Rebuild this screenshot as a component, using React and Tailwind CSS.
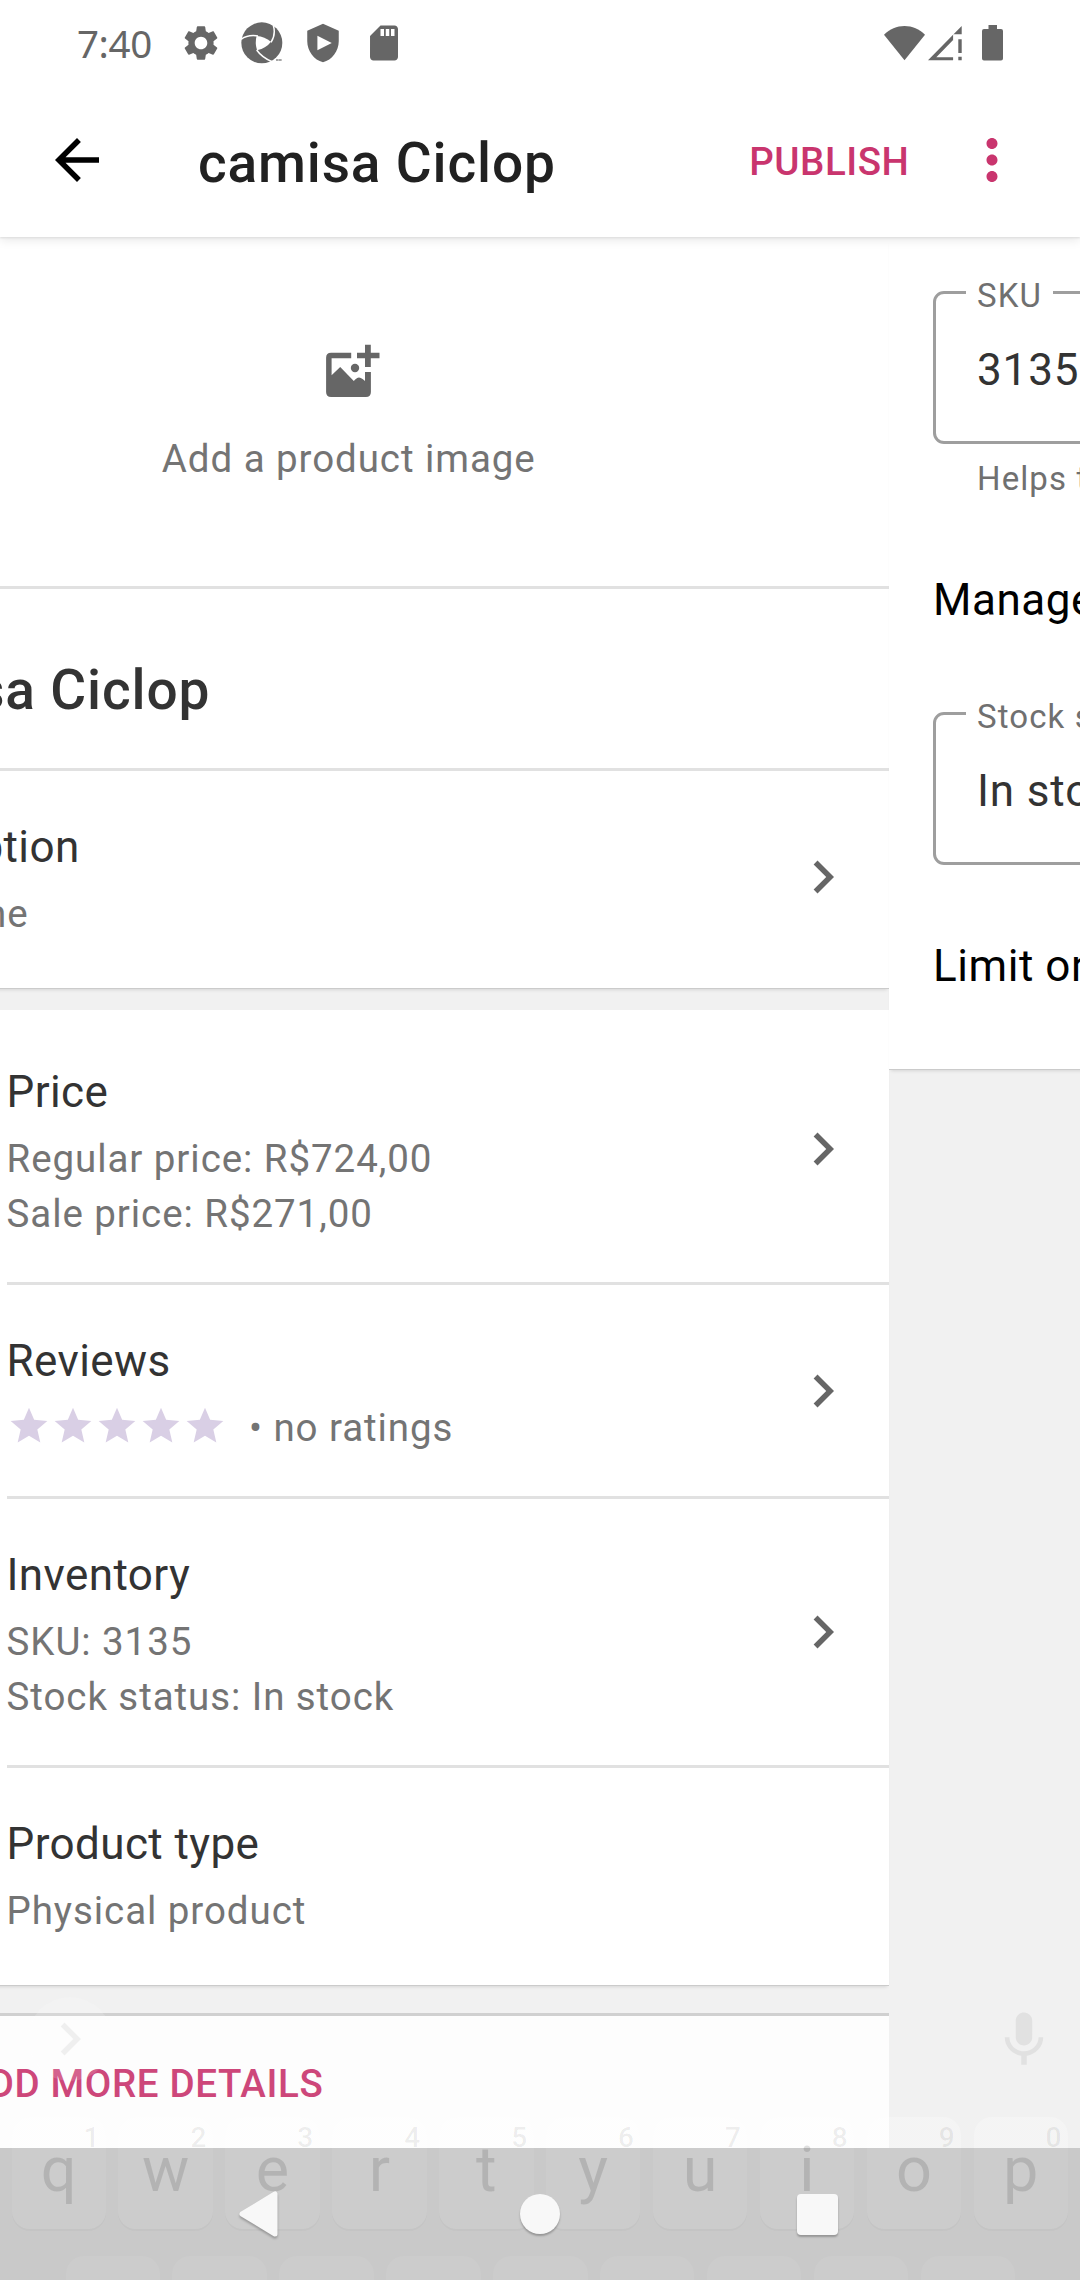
import React from "react";

const TITLE = "text-[44px] leading-[60px] tracking-[0.4px] text-[#333333] whitespace-nowrap";
const BODY = "text-[38.5px] leading-[55px] tracking-[0.93px] text-[#747474] whitespace-nowrap";

function StatusBar() {
  return (
    <div className="flex h-[86px] shrink-0 items-center pl-[77px] pr-[77px] text-[#666666]">
      <span className="w-[103px] font-['Noto_Sans'] text-[38.5px] leading-[60px] tracking-[-0.4px]">7:40</span>
      <div className="flex items-center gap-[19px]">
        <svg className="h-[42px] w-[42px]" viewBox="0 0 24 24" fill="currentColor">
          <path d="M19.14 12.94c.04-.3.06-.61.06-.94 0-.32-.02-.64-.07-.94l2.03-1.58c.18-.14.23-.41.12-.61l-1.92-3.32c-.12-.22-.37-.29-.59-.22l-2.39.96c-.5-.38-1.03-.7-1.62-.94L14.4 2.81c-.04-.24-.24-.41-.48-.41h-3.84c-.24 0-.43.17-.47.41L9.25 5.35c-.59.24-1.13.57-1.62.94L5.24 5.33c-.22-.08-.47 0-.59.22L2.74 8.87c-.12.21-.08.47.12.61l2.03 1.58c-.05.3-.09.63-.09.94s.02.64.07.94l-2.03 1.58c-.18.14-.23.41-.12.61l1.92 3.32c.12.22.37.29.59.22l2.39-.96c.5.38 1.03.7 1.62.94l.36 2.54c.05.24.24.41.48.41h3.84c.24 0 .44-.17.47-.41l.36-2.54c.59-.24 1.13-.56 1.62-.94l2.39.96c.22.08.47 0 .59-.22l1.92-3.32c.12-.22.07-.47-.12-.61l-2.01-1.58zM12 15.6c-1.98 0-3.6-1.62-3.6-3.6s1.62-3.6 3.6-3.6 3.6 1.62 3.6 3.6-1.62 3.6-3.6 3.6z" />
        </svg>
        <svg className="h-[42px] w-[42px]" viewBox="-1 -1 126 126">
          <circle cx="61.5" cy="61.5" r="61.5" fill="#666666" />
          <path d="M46 41Q70 43 89 58Q76 76 47 84Q40 60 46 41Z" fill="#ffffff" />
          <path d="M-1 51Q20 36 50 41M89 60Q104 38 96 9M46 83Q62 106 94 119" fill="none" stroke="#ffffff" strokeWidth="4.5" />
          <path d="M104 113h8M113 113h8" stroke="#8a8a8a" strokeWidth="4" />
        </svg>
        <svg className="h-[42px] w-[42px]" viewBox="0 0 24 24" fill="currentColor">
          <path fillRule="evenodd" d="M12 1L3 5v6c0 5.55 3.84 10.74 9 12 5.16-1.26 9-6.45 9-12V5l-9-4zM8.8 7.8L17 12l-8.2 4.2z" />
        </svg>
        <svg className="h-[42px] w-[42px]" viewBox="0 0 24 24" fill="currentColor">
          <path d="M18 2h-8L4.02 8 4 20c0 1.1.9 2 2 2h12c1.1 0 2-.9 2-2V4c0-1.1-.9-2-2-2zm-6 6h-2V4h2v4zm3 0h-2V4h2v4zm3 0h-2V4h2v4z" />
        </svg>
      </div>
      <div className="ml-auto flex items-center">
        <svg className="h-[35px] w-[41px]" viewBox="0 0 41 35" fill="currentColor">
          <path d="M20.5 34.3L0 8.8C5.5 3 13 0 20.5 0S35.5 3 41 8.8Z" />
        </svg>
        <svg className="ml-[3.5px] h-[35px] w-[34px]" viewBox="0 0 34 35" fill="currentColor">
          <path fillRule="evenodd" d="M33.7 0V8.3H25.1V34.3H0ZM25.1 14L8.3 31.3H25.1Z" />
          <path d="M30.3 13.3h3.4V27h-3.4zM30.3 30.7h3.4v3.6h-3.4z" />
        </svg>
        <svg className="ml-5 h-[36px] w-[21px]" viewBox="0 0 21 36" fill="currentColor">
          <path d="M6.5 0h8.5v4H19q2 0 2 2V33.5q0 2-2 2H2q-2 0-2-2V6q0-2 2-2h4.5z" />
        </svg>
      </div>
    </div>
  );
}

function TopBar() {
  return (
    <div className="flex h-[151px] shrink-0 items-center pb-[3px] pl-[44px] pr-[55px]">
      <svg className="h-[66px] w-[66px]" viewBox="0 0 24 24" fill="#000000">
        <path d="M20 11H7.83l5.59-5.59L12 4l-8 8 8 8 1.41-1.41L7.83 13H20v-2z" />
      </svg>
      <h1 className="ml-[88px] pt-[6px] text-[55px] font-medium leading-[70px] tracking-[0.85px] text-[#212121]">camisa Ciclop</h1>
      <span className="ml-auto pt-[3px] text-[38.5px] font-medium leading-[55px] tracking-[0.55px] text-[#c9356e]">PUBLISH</span>
      <svg className="ml-[49.5px] h-[66px] w-[66px]" viewBox="0 0 24 24" fill="#c9356e">
        <path d="M12 8c1.1 0 2-.9 2-2s-.9-2-2-2-2 .9-2 2 .9 2 2 2zm0 2c-1.1 0-2 .9-2 2s.9 2 2 2 2-.9 2-2-.9-2-2-2zm0 6c-1.1 0-2 .9-2 2s.9 2 2 2 2-.9 2-2-.9-2-2-2z" />
      </svg>
    </div>
  );
}

function Chevron() {
  return (
    <svg className="ml-auto h-[66px] w-[66px] shrink-0" viewBox="0 0 24 24" fill="#666666">
      <path d="M10 6L8.59 7.41 13.17 12l-4.58 4.59L10 18l6-6z" />
    </svg>
  );
}

function Row({ title, children, chevron = true }) {
  return (
    <div className="flex items-center pl-[198px] pr-[33.5px]">
      <div className="pb-[41px] pt-[46px]">
        <div className={TITLE}>{title}</div>
        <div className="mt-[9px]">{children}</div>
      </div>
      {chevron && <Chevron />}
    </div>
  );
}

function Divider({ inset }) {
  return <div className={inset ? "ml-[198px] h-[3px] bg-[#e1e1e1]" : "h-[3px] bg-[#e1e1e1]"} />;
}

function Stars() {
  return (
    <div className="mb-[3px] flex">
      {[0, 1, 2, 3, 4].map((i) => (
        <svg key={i} className="h-[44px] w-[44px]" viewBox="0 0 24 24" fill="#d9cfe5">
          <path d="M12 17.27L18.18 21l-1.64-7.03L22 9.24l-7.19-.61L12 2 9.19 8.63 2 9.24l5.46 4.73L5.82 21z" />
        </svg>
      ))}
    </div>
  );
}

const CARD = "relative bg-white shadow-[0_1px_0_#cbcbcb,0_4px_3px_-2px_#d6d6d6]";

function ProductPage() {
  return (
    <div className="-ml-[191.5px] w-[1080.5px] shrink-0">
      <div className={CARD}>
        <div className="flex flex-col items-center pb-[100px] pt-[107px]">
          <svg className="h-[54px] w-[64px]" viewBox="-9 0 64 54" fill="#666666">
            <path d="M39 .7h5.8v8h8.7v5.6h-8.7v8.6H39v-8.6h-8V8.7h8z" />
            <path fillRule="evenodd" d="M25.2 8.7v5.6H5.6v17L14.2 23 27.8 37q4-5 7-3 2.2 1 4.2 3V28h5.9v20q0 5-5 5H5.1q-5 0-5-5V13.7q0-5 5-5z" />
            <circle cx="29" cy="24" r="4.2" />
          </svg>
          <div className={"mt-[33px] " + BODY}>Add a product image</div>
        </div>
        <Divider />
        <div className="pb-[43px] pl-11 pt-[66px] text-[55px] font-medium leading-[70px] tracking-[0.85px] text-[#333333]">
          camisa Ciclop
        </div>
        <Divider />
        <div className="flex items-center pb-[6px] pl-11 pr-[33.5px]">
          <div className="pb-[41px] pt-[46px]">
            <div className={TITLE}>Description</div>
            <div className={"mt-[9px] w-[176px] text-right " + BODY}>ne</div>
          </div>
          <Chevron />
        </div>
      </div>

      <div className={"mt-[22px] py-[6px] " + CARD}>
        <Row title="Price">
          <div className={BODY}>Regular price: R$724,00</div>
          <div className={BODY}>Sale price: R$271,00</div>
        </Row>
        <Divider inset />
        <Row title="Reviews">
          <div className={"flex items-center " + BODY}>
            <Stars />
            <span className="ml-[22.5px]">• no ratings</span>
          </div>
        </Row>
        <Divider inset />
        <Row title="Inventory">
          <div className={BODY}>SKU: 3135</div>
          <div className={BODY}>Stock status: In stock</div>
        </Row>
        <Divider inset />
        <Row title="Product type" chevron={false}>
          <div className={BODY}>Physical product</div>
        </Row>
      </div>

      <div className="mt-7 h-[200px] border-t-[3px] border-[#d0d0d0] bg-[#fdfdfd] pt-[40px]">
        <div className="w-[515px] text-right text-[38.5px] font-medium leading-[55px] tracking-[0.65px] text-[#cd477a]">ADD MORE DETAILS</div>
      </div>
    </div>
  );
}

function Field({ label, value }) {
  return (
    <div className="relative h-[153px] w-[992px] rounded-[11px] border-[3px] border-[#9e9e9e] pl-[41px] pt-[46px]">
      <span className="absolute -top-[18px] left-[30px] whitespace-nowrap bg-white px-[11px] text-[33px] leading-[40px] tracking-[1.1px] text-[#707070]">
        {label}
      </span>
      <div className="text-[44px] leading-[60px] tracking-[0.87px] text-[#333333]">{value}</div>
    </div>
  );
}

function InventoryPage() {
  const option = "text-[44px] leading-[60px] tracking-[0.55px] text-black whitespace-nowrap";
  return (
    <div className="w-[1080px] shrink-0">
      <div className={"px-11 pb-[73px] pt-[54px] " + CARD}>
        <Field label="SKU" value="3135" />
        <div className="ml-11 mt-[15px] whitespace-nowrap text-[33px] leading-[40px] tracking-[1.1px] text-[#707070]">
          Helps to easily identify this product
        </div>
        <div className={"mt-[71px] " + option}>Manage stock</div>
        <div className="mt-[82px]">
          <Field label="Stock status" value="In stock" />
        </div>
        <div className={"mt-[71px] " + option}>Limit one per order</div>
      </div>
    </div>
  );
}

const KEYS = ["q", "w", "e", "r", "t", "y", "u", "i", "o", "p"];
const KEY = "w-[94.5px] rounded-[18px]";

function FadingKeyboard() {
  return (
    <div className="absolute inset-x-0 bottom-0 flex h-[303px] flex-col overflow-hidden">
      <div className="flex h-[124px] shrink-0 justify-between pl-[28px] pr-[23px] pt-[20px]">
        <div className="flex h-[84px] w-[84px] items-center justify-center rounded-full bg-white/15">
          <svg className="h-[66px] w-[66px]" viewBox="0 0 24 24" fill="#000000" fillOpacity="0.055">
            <path d="M10 6L8.59 7.41 13.17 12l-4.58 4.59L10 18l6-6z" />
          </svg>
        </div>
        <svg className="mt-[9.5px] h-[66px] w-[66px]" viewBox="0 0 24 24" fill="#e1e1e1">
          <path d="M12 14c1.66 0 2.99-1.34 2.99-3L15 5c0-1.66-1.34-3-3-3S9 3.34 9 5v6c0 1.66 1.34 3 3 3zm5.3-3c0 3-2.54 5.1-5.3 5.1S6.7 14 6.7 11H5c0 3.41 2.72 6.23 6 6.72V21h2v-3.28c3.28-.48 6-3.3 6-6.72h-1.7z" />
        </svg>
      </div>
      <div className="flex shrink-0 gap-[12.4px] pl-[11.5px] pt-[15.5px]">
        {KEYS.map((k, i) => (
          <div key={k} className={"flex h-[112px] flex-col bg-gradient-to-b from-white/25 from-[31px] to-white/[0.06] to-[31px] shadow-[0_2px_0_rgba(0,0,0,0.025)] " + KEY}>
            <span className="pr-[6.5px] pt-[5px] text-right text-[28px] font-medium leading-[32px] text-black/[0.07]">{(i + 1) % 10}</span>
            <span className="-mt-[16px] text-center text-[63px] leading-[64px] text-black/[0.12]">{k}</span>
          </div>
        ))}
      </div>
      <div className="mt-[27px] flex shrink-0 gap-[12.4px] pl-[65.5px]">
        {KEYS.slice(1).map((k) => (
          <div key={k} className={"h-[112px] bg-white/[0.06] " + KEY} />
        ))}
      </div>
    </div>
  );
}

function NavButtons() {
  return (
    <div className="absolute inset-x-0 bottom-0 flex h-[132px] items-center justify-between pl-[239px] pr-[242px]">
      <svg className="h-[50px] w-[41px] drop-shadow-[0_2px_1px_rgba(0,0,0,0.25)]" viewBox="0 0 41 50">
        <path d="M3 25L36 5V45Z" fill="#f8f8f8" stroke="#f8f8f8" strokeWidth="5" strokeLinejoin="round" />
      </svg>
      <div className="ml-[3px] h-[40px] w-[40px] rounded-full bg-[#f8f8f8] shadow-[0_2px_2px_rgba(0,0,0,0.25)]" />
      <div className="h-[41px] w-[41px] rounded-[4px] bg-[#f8f8f8] shadow-[0_2px_2px_rgba(0,0,0,0.25)]" />
    </div>
  );
}

export default function App() {
  return (
    <div className="relative flex h-[2280px] w-[1080px] flex-col overflow-hidden bg-[#f1f1f1] font-['Roboto',sans-serif]">
      <div className="relative z-10 flex flex-col bg-white shadow-[0_1px_2px_#dcdcdc,0_3px_10px_#e8e8e8]">
        <StatusBar />
        <TopBar />
      </div>
      <div className="flex h-[1911px] shrink-0 overflow-hidden">
        <ProductPage />
        <InventoryPage />
      </div>
      <div className="h-[132px] shrink-0 bg-[#c9c9c9]" />
      <FadingKeyboard />
      <NavButtons />
    </div>
  );
}
